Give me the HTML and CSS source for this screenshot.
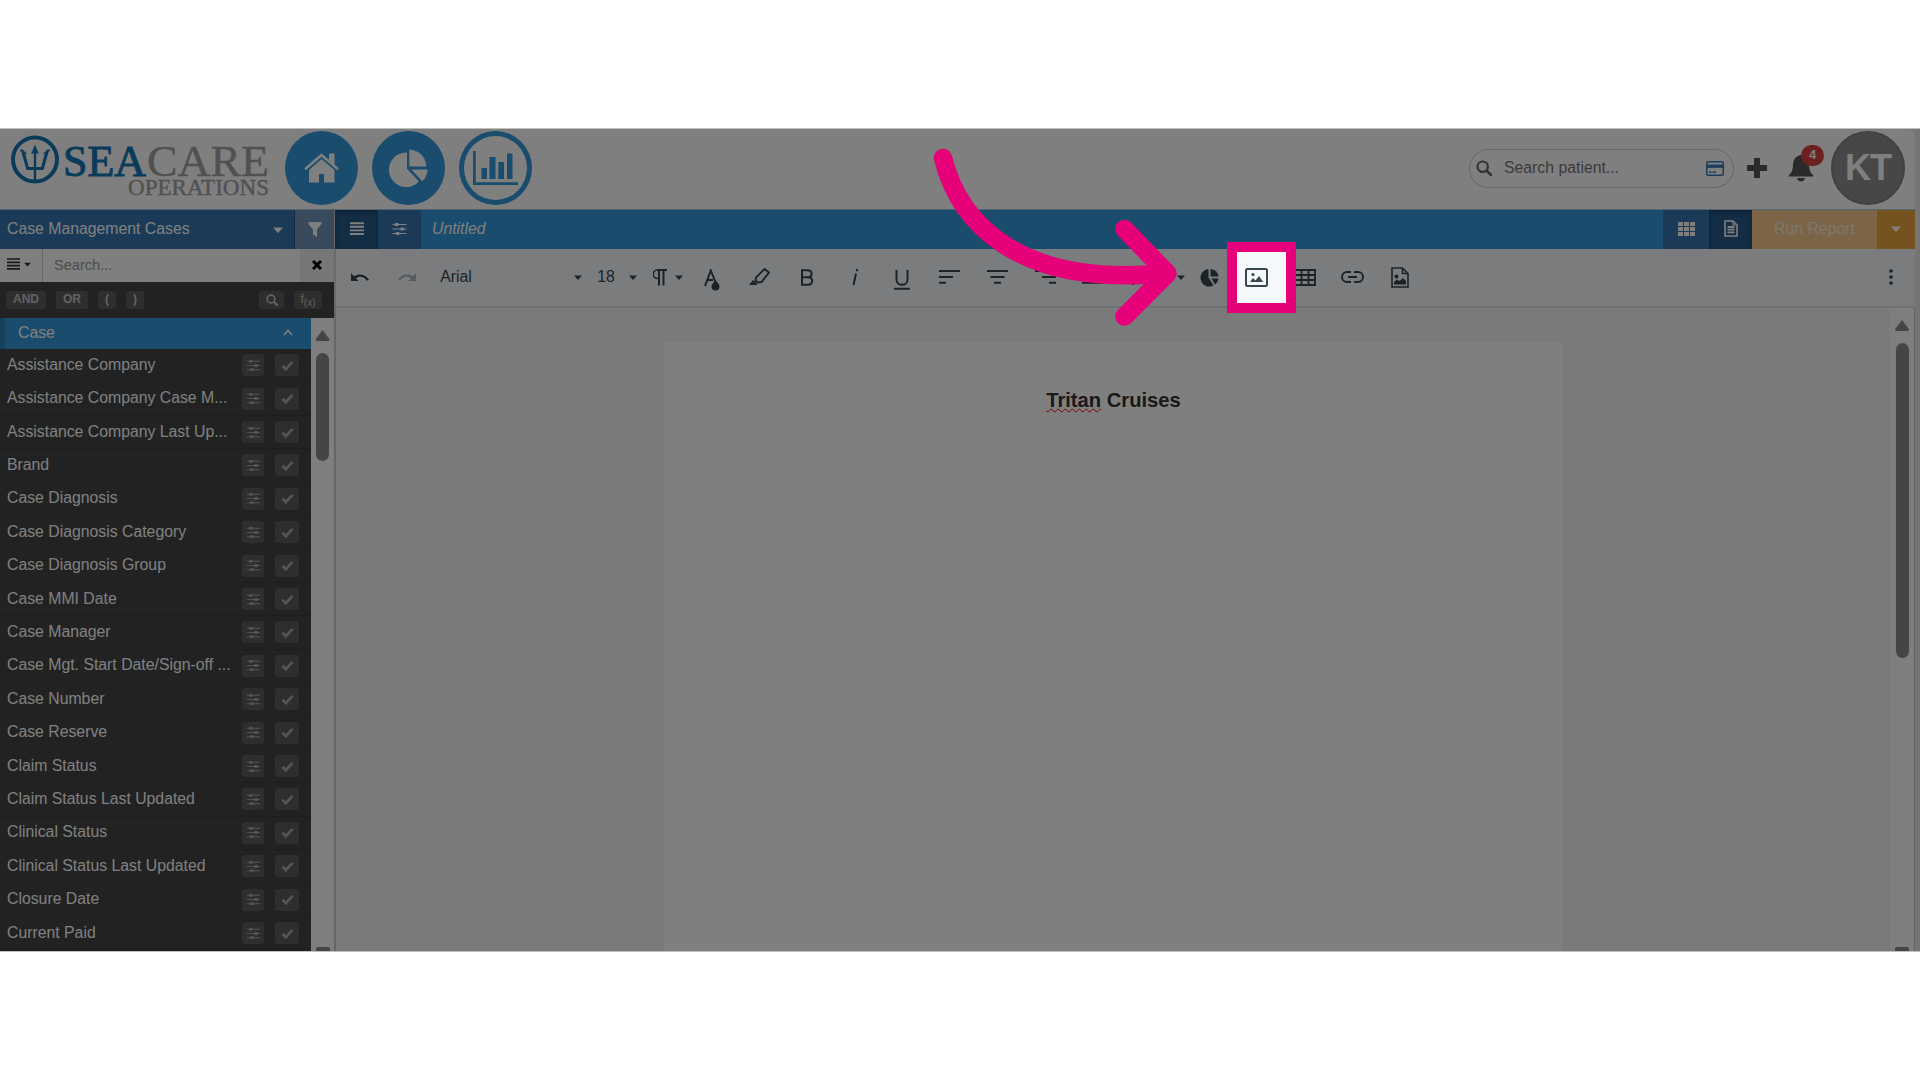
FILE: index.html
```
<!DOCTYPE html>
<html lang="en">
<head>
  <meta charset="UTF-8" />
  <meta name="viewport" content="width=device-width, initial-scale=1" />
  <title>SeaCare Operations - Report Builder</title>
  <link rel="stylesheet" href="styles.css">
</head>
<body>
  <!-- Shared icons -->
  <svg class="sprite">
    <symbol id="i-sliders" viewBox="0 0 14 14">
      <path d="M0 2.5h14M0 7h14M0 11.5h14" stroke="currentColor" stroke-width="1.1"/>
      <path d="M2.5 1h3.400v3H2.5zM8 5.500h3.400v3H8zM3.500 10h3.400v3H3.500z" fill="currentColor"/>
    </symbol>
    <symbol id="i-bars" viewBox="0 0 14 14">
      <path d="M0 1.500h14M0 5.200h14M0 8.900h14M0 12.600h14" stroke="currentColor" stroke-width="2.200"/>
    </symbol>
    <symbol id="i-search" viewBox="0 0 16 16">
      <circle cx="6.700" cy="6.700" r="5.200" fill="none" stroke="currentColor" stroke-width="2.200"/>
      <path d="M10.600 10.600l4.400 4.400" stroke="currentColor" stroke-width="2.600" stroke-linecap="round"/>
    </symbol>
    <symbol id="i-check" viewBox="0 0 14 12">
      <path d="M1.500 6.300l3.700 3.700L12.500 2" fill="none" stroke="currentColor" stroke-width="3"/>
    </symbol>
    <symbol id="i-caret" viewBox="0 0 10 6"><path d="M0 .5h10L5 6z" fill="currentColor"/></symbol>
  </svg>

  <div class="screen">
    <header class="header">
      <svg class="logo" width="262" height="81" viewBox="0 0 262 81">
        <circle cx="26" cy="30.500" r="22" class="logo-ring"/>
        <path class="logo-blue" d="M26 15.500l3.800 9h-2.600V38h5l3.600-13.500-2.300.8 5.500-5.300 2.500 1.800-1.800.7L34.500 41h-7.300v12h-2.400V41h-7.300l-5.200-18.500-1.800-.7L13 20l5.500 5.300-2.300-.8L19.800 38h5V24.500h-2.600z"/>
        <text x="54" y="46.500" font-size="45" textLength="83" lengthAdjust="spacingAndGlyphs" class="logo-sea">SEA</text>
        <text x="138" y="46.500" font-size="45" textLength="122" lengthAdjust="spacingAndGlyphs" class="logo-grey">CARE</text>
        <text x="119" y="66" font-size="24" textLength="141" lengthAdjust="spacingAndGlyphs" class="logo-grey">OPERATIONS</text>
      </svg>
      <nav class="nav">
        <a class="nav-btn">
          <svg width="35" height="30" viewBox="0 0 35 30"><path d="M17.500 6L30.500 17v12.500H20V21h-5v8.500H5V17z" fill="#fff"/><path d="M1 16.300L17.500 2 34 16.300" fill="none" stroke="#fff" stroke-width="2.600"/><path d="M25 .5h5.500V12L25 7z" fill="#fff"/></svg>
        </a>
        <a class="nav-btn">
          <svg width="39" height="38" viewBox="0 0 39 38" fill="#fff"><path d="M18 3.500v16.300L30 32.500A17.300 17.300 0 1 1 18 3.500z"/><path d="M20.300.5A17.500 17.500 0 0 1 37.300 17.500h-17z"/><path d="M22.300 20.500H38.500c0 5-2.200 9-5.200 11.800z"/></svg>
        </a>
        <a class="nav-btn outlined">
          <svg width="45" height="34" viewBox="0 0 45 34" fill="#3498db"><path d="M0 0h2.700v31.300H45V34H0zM8.500 17H14v11H8.500zM16.500 6H22.500v22h-6zM25.300 11H31v17h-5.700zM34 2.500h5.500V28H34z"/></svg>
        </a>
      </nav>
      <div class="header-right">
        <div class="patient-search">
          <svg class="grey" width="16" height="16"><use href="#i-search"/></svg>
          <span>Search patient...</span>
          <svg width="18" height="15" viewBox="0 0 18 15"><rect x=".8" y=".8" width="16.400" height="13.400" rx="1.500" fill="none" stroke="#337ab7" stroke-width="1.500"/><path d="M1 5.200h16" stroke="#337ab7" stroke-width="3.200"/><path d="M3 11.300h2.500M6.500 11.300H10" stroke="#337ab7" stroke-width="1.400"/></svg>
        </div>
        <svg class="plus" width="22" height="22" viewBox="0 0 22 22"><path d="M8 1h6v7h7v6h-7v7H8v-7H1V8h7z" fill="#555"/></svg>
        <div class="bell">
          <svg width="26" height="28" viewBox="0 0 26 28"><path d="M13 1c5.500.8 7.800 5 8 10 .2 5.500 1.500 8 4.300 10.500v1H.7v-1C3.500 19 4.800 16.500 5 11c.2-5 2.500-9.200 8-10zM9 24h8c-.3 2.300-1.800 3.500-4 3.500S9.300 26.300 9 24z" fill="#555"/></svg>
          <span class="badge">4</span>
        </div>
        <div class="avatar">KT</div>
      </div>
    </header>

    <div class="main">
      <aside class="sidebar">
        <div class="source">
          <span class="source-name">Case Management Cases</span>
          <svg class="source-caret" width="10" height="6"><use href="#i-caret"/></svg>
          <div class="filter-btn"><svg width="14" height="15" viewBox="0 0 14 15"><path d="M.5 0h13v2L9 7.500V15l-4-2.500v-5L.5 2z" fill="currentColor"/></svg></div>
        </div>
        <div class="field-search">
          <div class="list-btn"><svg width="13" height="12" viewBox="0 0 13 12"><path d="M0 1h13M0 4.300h13M0 7.600h13M0 10.900h13" stroke="currentColor" stroke-width="1.700"/></svg><svg width="7" height="5"><use href="#i-caret"/></svg></div>
          <div class="field-input">Search...</div>
          <div class="clear-btn"><svg width="10" height="10" viewBox="0 0 10 10"><path d="M1 1l8 8M9 1L1 9" stroke="#000" stroke-width="3"/></svg></div>
        </div>
        <div class="ops">
          <span class="op op-and">AND</span>
          <span class="op op-or">OR</span>
          <span class="op">(</span>
          <span class="op">)</span>
          <span class="op op-find"><svg width="12" height="12"><use href="#i-search"/></svg></span>
          <span class="op op-fx">f<sub>(x)</sub></span>
        </div>
        <div class="fields">
          <div class="fields-list">
            <div class="group">Case<svg width="10" height="7" viewBox="0 0 10 7"><path d="M1 6l4-4.500L9 6" fill="none" stroke="currentColor" stroke-width="1.600"/></svg></div>
            <div id="rows"></div>
          </div>
          <div class="scroll">
            <i class="scroll-up"></i>
            <i class="thumb"></i>
            <i class="scroll-end"></i>
          </div>
        </div>
      </aside>

      <section class="report">
        <div class="report-bar">
          <div class="bar-btn on"><svg width="14" height="13" viewBox="0 0 14 13"><path d="M0 1.200h14M0 4.800h14M0 8.400h14M0 12h14" stroke="currentColor" stroke-width="1.900"/></svg></div>
          <div class="bar-btn"><svg width="15" height="14"><use href="#i-sliders"/></svg></div>
          <em class="report-name">Untitled</em>
          <div class="bar-btn grid-btn"><svg width="17" height="14" viewBox="0 0 17 14" fill="currentColor"><path d="M0 0h5v4H0zM6 0h5v4H6zM12 0h5v4h-5zM0 5h5v4H0zM6 5h5v4H6zM12 5h5v4h-5zM0 10h5v4H0zM6 10h5v4H6zM12 10h5v4h-5z"/></svg></div>
          <div class="bar-btn on"><svg width="14" height="17" viewBox="0 0 14 17"><path d="M1 1h8l4 4v11H1z" fill="none" stroke="currentColor" stroke-width="1.600"/><path d="M9 1v4h4" fill="none" stroke="currentColor" stroke-width="1.200"/><path d="M3.500 7h7M3.500 9.700h7M3.500 12.400h7" stroke="currentColor" stroke-width="1.800"/></svg></div>
          <div class="run">Run Report</div>
          <div class="run-more"><svg width="10" height="6"><use href="#i-caret"/></svg></div>
        </div>

        <div class="toolbar">
          <div class="tool"><svg width="20" height="9" viewBox="0 0 20 10"><path d="M0 0v9h8.500L5.500 6C9 3.200 14 3.200 17.800 8.500L20 7.500C15.800.6 8.500.3 3.300 3.600z" fill="currentColor"/></svg></div>
          <div class="tool off"><svg width="20" height="9" viewBox="0 0 20 10"><path d="M20 0v9h-8.500l3-3C11 3.200 6 3.200 2.200 8.500L0 7.500C4.200.6 11.500.3 16.700 3.600z" fill="currentColor"/></svg></div>
          <div class="tool font">Arial<svg width="8" height="5"><use href="#i-caret"/></svg></div>
          <div class="tool size">18<svg width="8" height="5"><use href="#i-caret"/></svg></div>
          <div class="tool para">
            <svg width="14" height="17" viewBox="0 0 14 17"><path d="M4.500 1H14M6 1v15.500M10.500 1v15.500" fill="none" stroke="currentColor" stroke-width="2"/><path d="M6 1v8.500H4.500a4.200 4.200 0 0 1 0-8.500z" fill="none" stroke="currentColor" stroke-width="1.600"/></svg>
            <svg width="8" height="5"><use href="#i-caret"/></svg>
          </div>
          <div class="tool"><svg class="low" width="16" height="22" viewBox="0 0 16 22"><path d="M1 17L6.800 1.500 11 12M3 11h6" fill="none" stroke="currentColor" stroke-width="2"/><path d="M11.500 11c2.500 3 4 4.500 4 6.500a4 4 0 0 1-8 0c0-2 1.500-3.500 4-6.500z" fill="currentColor"/></svg></div>
          <div class="tool"><svg width="21" height="18" viewBox="0 0 21 18"><path d="M7 9.500L15.500 1 20 4.500 12.500 14l-3.500.5-2.500-2z" fill="none" stroke="currentColor" stroke-width="1.900"/><path d="M4 12l4.500 4-1 1H0z" fill="currentColor"/></svg></div>
          <div class="tool"><svg width="14" height="17" viewBox="0 0 14 17"><path d="M2 1.200h5.500c5.500 0 5.500 7 0 7H2h6c5.500 0 5.500 7.600 0 7.600H2z" fill="none" stroke="currentColor" stroke-width="2"/></svg></div>
          <div class="tool"><svg width="8" height="18" viewBox="0 0 8 18"><path d="M5 5.500L2.500 17M6.200 1l-.5 2.200" stroke="currentColor" stroke-width="2"/></svg></div>
          <div class="tool"><svg class="low" width="16" height="20" viewBox="0 0 16 20"><path d="M2.500 0v9.500c0 7 11 7 11 0V0M0 18.800h16" fill="none" stroke="currentColor" stroke-width="2"/></svg></div>
          <div class="tool"><svg width="21" height="14" viewBox="0 0 21 14"><path d="M0 1h21M0 7h14M0 12.700h7" stroke="currentColor" stroke-width="2"/></svg></div>
          <div class="tool"><svg width="21" height="14" viewBox="0 0 21 14"><path d="M0 1h21M3.500 7h14M7 12.700h7" stroke="currentColor" stroke-width="2"/></svg></div>
          <div class="tool"><svg width="21" height="14" viewBox="0 0 21 14"><path d="M0 1h21M7 7h14M14 12.700h7" stroke="currentColor" stroke-width="2"/></svg></div>
          <div class="tool"><svg width="21" height="14" viewBox="0 0 21 14"><path d="M0 1h21M0 7h21M0 12.700h21" stroke="currentColor" stroke-width="2"/></svg></div>
          <div class="tool list">
            <svg width="18" height="17" viewBox="0 0 18 17"><path d="M6 2h12M6 8h12M5 14h13M2 0v4M2 6v4M2 12v4" stroke="currentColor" stroke-width="2"/></svg>
            <svg class="list-caret" width="8" height="5"><use href="#i-caret"/></svg>
          </div>
          <div class="tool"><svg width="19" height="19" viewBox="0 0 19 19" fill="currentColor"><path d="M8.500 1v8.500l5 8A8.800 8.800 0 1 1 8.500 1z"/><path d="M10.500 1a8.500 8.500 0 0 1 8 7.500h-8z"/><path d="M11.500 10.500h7a8 8 0 0 1-3.500 6z"/></svg></div>
          <div class="tool"><svg width="23" height="19" viewBox="0 0 23 19"><rect x="1" y="1" width="21" height="17" rx="1.500" fill="none" stroke="currentColor" stroke-width="2"/><circle cx="8" cy="6.500" r="1.600" fill="currentColor"/><path d="M5 14l3-4 2.500 2.500L14 8l4 6z" fill="currentColor"/></svg></div>
          <div class="tool"><svg width="22" height="17" viewBox="0 0 22 17"><path d="M1 1h20v15H1zM1 6h20M1 11h20M7.500 1v15M14.500 1v15" fill="none" stroke="currentColor" stroke-width="1.800"/></svg></div>
          <div class="tool"><svg width="23" height="12" viewBox="0 0 23 12"><path d="M10 1H6a5 5 0 0 0 0 10h4M13 1h4a5 5 0 0 1 0 10h-4M7 6h9" fill="none" stroke="currentColor" stroke-width="2"/></svg></div>
          <div class="tool"><svg width="18" height="21" viewBox="0 0 18 21"><path d="M1 1h10.500L17 6.500V20H1zM11.500 1v5.500H17" fill="none" stroke="currentColor" stroke-width="1.600"/><circle cx="5.500" cy="9.500" r="2" fill="currentColor"/><path d="M3 17.500V15l3-2.500 2.500 1.500 3.500-3 3 3v3.500z" fill="currentColor"/></svg></div>
          <div class="tool more"><svg width="4" height="16" viewBox="0 0 4 16" fill="currentColor"><circle cx="2" cy="2" r="1.800"/><circle cx="2" cy="8" r="1.800"/><circle cx="2" cy="14" r="1.800"/></svg></div>
        </div>

        <div class="canvas">
          <div class="page"><h1><span class="misspelt">Tritan</span> Cruises</h1></div>
          <div class="scroll canvas-scroll">
            <i class="scroll-up"></i>
            <i class="thumb"></i>
            <i class="scroll-end"></i>
          </div>
        </div>
      </section>
    </div>

    <!-- Dims everything but the image button -->
    <div class="spotlight"></div>
    <svg class="pointer" width="260" height="200" viewBox="930 140 260 200">
      <path d="M943 158C958 218.500 1014 288.500 1166 273M1124.500 229L1167.500 273.500 1124.500 316.500"/>
    </svg>
  </div>

  <script>
    const fields = [
      'Assistance Company',
      'Assistance Company Case M...',
      'Assistance Company Last Up...',
      'Brand',
      'Case Diagnosis',
      'Case Diagnosis Category',
      'Case Diagnosis Group',
      'Case MMI Date',
      'Case Manager',
      'Case Mgt. Start Date/Sign-off ...',
      'Case Number',
      'Case Reserve',
      'Claim Status',
      'Claim Status Last Updated',
      'Clinical Status',
      'Clinical Status Last Updated',
      'Closure Date',
      'Current Paid'
    ];

    document.getElementById('rows').innerHTML = fields.map(name => `
      <div class="row">
        <span class="row-name">${name}</span>
        <span class="row-btn"><svg width="13" height="13"><use href="#i-sliders"/></svg></span>
        <span class="row-btn check"><svg width="13" height="11"><use href="#i-check"/></svg></span>
      </div>`).join('');
  </script>
</body>
</html>
```
FILE: styles.css
```
* {
  box-sizing: border-box;
}

body {
  margin: 0;
  background: #fff;
  font-family: "Liberation Sans", Arial, sans-serif;
  font-size: 15.800px;
  color: #333;
  overflow: hidden;
}

svg {
  display: block;
  flex: none;
}

.sprite {
  display: none;
}

.screen {
  position: relative;
  height: 824px;
  margin-top: 128px;
  padding-right: 5px;
  background: #ece8e6;
  border-top: 1px solid #bfbfbf;
  border-bottom: 1px solid #bfbfbf;
  overflow: hidden;
  display: flex;
  flex-direction: column;
}

/* Header */
.header {
  height: 81px;
  flex: none;
  display: flex;
  align-items: center;
  padding: 0 10px 2px 9px;
  background: #fff;
  border-bottom: 1px solid #a9cbe4;
  border-top-right-radius: 8px;
}

.logo {
  margin-top: 2px;
  font-family: "Liberation Serif", "Times New Roman", serif;
}

.logo-ring {
  fill: none;
  stroke: #1579b5;
  stroke-width: 4;
}

.logo-blue {
  fill: #1579b5;
}

.logo-sea {
  fill: #1579b5;
  stroke: #1579b5;
  stroke-width: 1;
}

.logo-grey {
  fill: #a2a2a2;
  stroke: #a2a2a2;
  stroke-width: 0.4;
}

.nav {
  display: flex;
  gap: 14px;
  margin-left: 14px;
}

.nav-btn {
  width: 73px;
  height: 74px;
  border-radius: 50%;
  background: #3498db;
  display: flex;
  align-items: center;
  justify-content: center;
}

.nav-btn.outlined {
  background: #fff;
  border: 5px solid #3498db;
}

.header-right {
  margin-left: auto;
  display: flex;
  align-items: center;
}

.patient-search {
  width: 265px;
  height: 39px;
  border: 1px solid #ccc;
  border-radius: 20px;
  display: flex;
  align-items: center;
  gap: 12px;
  padding: 0 9px 0 6px;
  color: #777;
}

.patient-search span {
  flex: 1;
}

.grey {
  color: #666;
}

.plus {
  margin-left: 12px;
}

.bell {
  position: relative;
  margin: 0 17px 0 20px;
}

.badge {
  position: absolute;
  left: 13px;
  top: -9px;
  width: 23px;
  height: 21px;
  border-radius: 11px;
  background: #d84040;
  color: #fff;
  font-size: 13px;
  font-weight: bold;
  line-height: 20px;
  text-align: center;
}

.avatar {
  width: 74px;
  height: 74px;
  border-radius: 50%;
  background: #8e8e8e;
  border: 2px solid #828282;
  color: #fff;
  font-size: 36px;
  font-weight: bold;
  line-height: 70px;
  text-align: center;
  letter-spacing: -1px;
}

.main {
  flex: 1;
  min-height: 0;
  display: flex;
}

/* Sidebar */
.sidebar {
  width: 335px;
  flex: none;
  display: flex;
  flex-direction: column;
  border-right: 1px solid #ccc;
  background: #444;
}

.source {
  height: 39px;
  flex: none;
  display: flex;
  align-items: center;
  background: #3675b0;
  color: #fff;
}

.source-name {
  flex: 1;
  padding: 0 0 2px 7px;
}

.source-caret {
  margin-right: 11px;
}

.filter-btn {
  width: 40px;
  height: 39px;
  border-left: 1px solid #24527a;
  background: #7395b8;
  display: flex;
  align-items: center;
  justify-content: center;
}

.field-search {
  height: 33px;
  flex: none;
  display: flex;
  background: #fff;
}

.list-btn {
  width: 43px;
  display: flex;
  align-items: center;
  gap: 4px;
  padding: 0 0 3px 7px;
  border-right: 1px solid #ccc;
}

.field-input {
  flex: 1;
  padding: 8px 11px;
  font-size: 14.600px;
  line-height: 17px;
  color: #999;
}

.clear-btn {
  width: 34px;
  background: #eee;
  display: flex;
  align-items: center;
  justify-content: center;
  padding-bottom: 2px;
}

.ops {
  height: 36px;
  flex: none;
  display: flex;
  align-items: center;
  gap: 10px;
  padding: 0 12px 0 6px;
}

.op {
  width: 18px;
  height: 18px;
  border-radius: 3px;
  background: #5c5c5c;
  color: #c4c4c4;
  font-size: 12px;
  font-weight: bold;
  line-height: 17px;
  text-align: center;
}

.op-and {
  width: 40px;
}

.op-or {
  width: 32px;
}

.op-find {
  width: 25px;
  margin-left: auto;
  display: flex;
  align-items: center;
  justify-content: center;
}

.op-fx {
  width: 28px;
  font-weight: normal;
}

.op-fx sub {
  font-size: 10px;
  line-height: 0;
}

.fields {
  flex: 1;
  min-height: 0;
  display: flex;
}

.fields-list {
  width: 311px;
  overflow: hidden;
}

.group {
  height: 31px;
  display: flex;
  align-items: center;
  justify-content: space-between;
  padding: 0 18px 2px 13px;
  border-left: 5px solid #2b81b8;
  background: #3498db;
  color: #fff;
}

.row {
  height: 33.420px;
  display: flex;
  align-items: center;
  padding: 0 12px 0 6px;
  border-bottom: 1px solid #3a3a3a;
  color: #fff;
}

.row-name {
  flex: 1;
  padding: 0 0 1px 1px;
  white-space: nowrap;
}

.row-btn {
  width: 22px;
  height: 22px;
  flex: none;
  margin-right: 11px;
  border-radius: 3px;
  background: #5c5c5c;
  color: #aaa;
  display: flex;
  align-items: center;
  justify-content: center;
}

.row-btn.check {
  width: 24px;
  margin: 0;
}

.scroll {
  flex: 1;
  display: flex;
  flex-direction: column;
  align-items: center;
  background: #fcfcfc;
}

.scroll-up {
  width: 14px;
  height: 11px;
  margin: 12px 0;
  background: #8b8b8b;
  clip-path: polygon(50% 0, 100% 85%, 95% 100%, 5% 100%, 0 85%);
}

.thumb {
  width: 13px;
  height: 108px;
  border-radius: 7px;
  background: #8b8b8b;
}

.scroll-end {
  width: 14px;
  height: 4px;
  margin-top: auto;
  border-radius: 2px 2px 0 0;
  background: #8b8b8b;
}

/* Report */
.report {
  flex: 1;
  min-width: 0;
  display: flex;
  flex-direction: column;
}

.report-bar {
  height: 39px;
  flex: none;
  display: flex;
  background: #3498db;
  color: #fff;
}

.bar-btn {
  width: 43px;
  display: flex;
  align-items: center;
  justify-content: center;
  padding-bottom: 2px;
  background: #3675b0;
}

.bar-btn.on {
  background: #265a88;
  box-shadow: inset 0 2px 4px rgba(0, 0, 0, 0.25);
}

.grid-btn {
  width: 46px;
}

.report-name {
  flex: 1;
  padding: 10px 11px;
  line-height: 18px;
}

.run {
  width: 125px;
  background: #f8c98e;
  color: #fbeedd;
  line-height: 37px;
  text-align: center;
}

.run-more {
  width: 38px;
  background: #eba73c;
  display: flex;
  align-items: center;
  justify-content: center;
  padding-bottom: 2px;
}

.toolbar {
  height: 59px;
  flex: none;
  display: flex;
  background: #f4f8fb;
  border-bottom: 2px solid #e0e3e5;
  border-left: 1px solid #ddd;
  color: #37474f;
}

.tool {
  width: 47.600px;
  flex: none;
  display: flex;
  align-items: center;
  justify-content: center;
  padding-bottom: 1px;
}

.tool.off {
  color: #b0b7bb;
}

.low {
  margin-top: 6px;
}

.tool.font {
  width: 157px;
  justify-content: space-between;
  padding-left: 9px;
  padding-right: 6px;
}

.tool.size {
  width: 57px;
  justify-content: space-between;
  padding-left: 9px;
  padding-right: 8px;
}

.tool.para {
  width: 43px;
  gap: 8px;
  padding-left: 3px;
}

.tool.list {
  width: 69px;
  justify-content: flex-start;
  padding-left: 14px;
}

.list-caret {
  margin-left: 28px;
}

.tool.more {
  margin-left: auto;
}

.canvas {
  flex: 1;
  min-height: 0;
  display: flex;
  background: #f5f5f5;
  border-left: 1px solid #ccc;
}

.page {
  width: 899px;
  margin: 34px 327px 0 328px;
  background: #fff;
}

.page h1 {
  margin: 47px 0 0;
  font-size: 20.200px;
  line-height: 23px;
  text-align: center;
}

.misspelt {
  text-decoration: underline wavy #f00 1px;
}

.canvas-scroll {
  border-right: 1px solid #ccc;
}

.canvas-scroll .thumb {
  height: 315px;
}

/* Walkthrough overlay */
.spotlight {
  position: absolute;
  left: 1227px;
  top: 113px;
  width: 69px;
  height: 71px;
  border: 10px solid #e6007a;
  box-shadow: 0 0 0 1920px rgba(0, 0, 0, 0.5);
}

.pointer {
  position: absolute;
  left: 930px;
  top: 11px;
  fill: none;
  stroke: #e6007a;
  stroke-width: 18.500px;
  stroke-linecap: round;
  stroke-linejoin: round;
}
```
